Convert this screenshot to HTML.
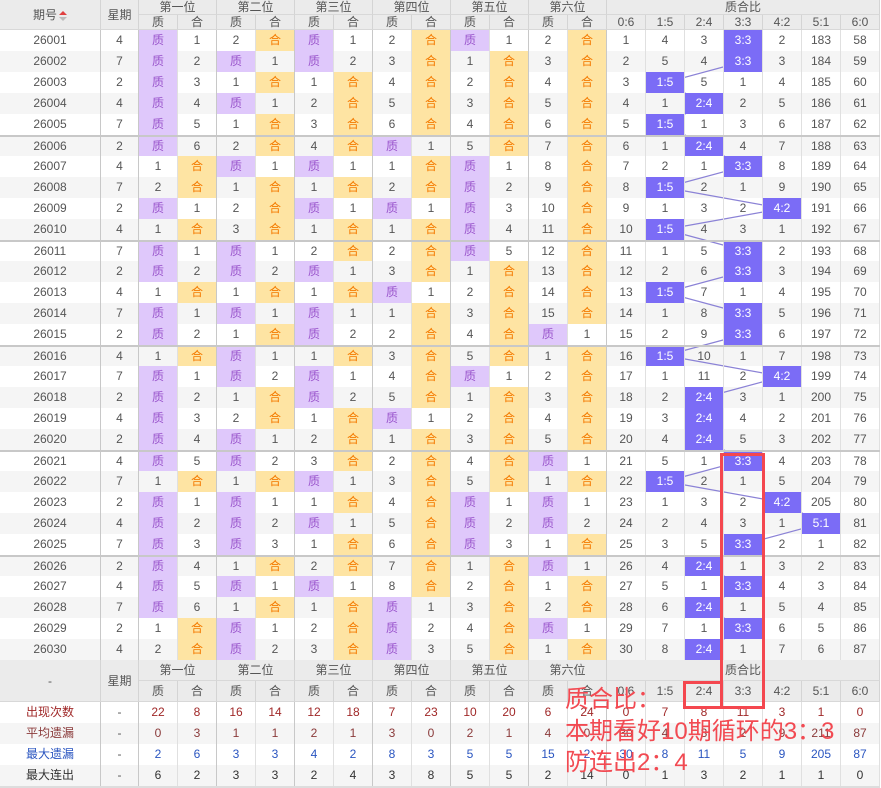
<!DOCTYPE html>
<html><head><meta charset="utf-8">
<style>
*{margin:0;padding:0}
body{width:881px;height:788px;overflow:hidden;background:#fff;font-family:"Liberation Sans","Noto Sans CJK SC",sans-serif;position:relative}
.hd{display:grid;grid-template-columns:101px 38px repeat(19,39px);grid-template-rows:15px 15px;background:#ebebeb;width:880px}
.hd div{font-size:12px;color:#555;text-align:center;line-height:15px;border-right:1px solid #d4d4d4;border-bottom:1px solid #d8d8d8;box-sizing:border-box}
.hd .s2{grid-row:span 2;line-height:30px}
.hd .c2{grid-column:span 2}
.hd .c7{grid-column:span 7}
.ft{grid-template-rows:21px 21px;position:absolute;left:0;top:660px}
.ft div{line-height:21px}
.ft .s2{line-height:42px}
.data{position:absolute;left:0;top:30px;width:880px;height:630px;background:repeating-linear-gradient(#fff 0 21px,#f5f5f5 21px 42px)}
.r{display:flex;height:21px;position:relative;z-index:1;box-sizing:border-box}
.r i{font-style:normal;width:39px;flex:none;box-sizing:border-box;border-right:1px solid #e0e0e0;text-align:center;line-height:21px;font-size:12px;color:#555}
.r i:first-child{width:101px;border-right-color:#c8c8c8}
.r i:nth-child(2){width:38px}
.r i:nth-child(2),.r i:nth-child(4),.r i:nth-child(6),.r i:nth-child(8),.r i:nth-child(10),.r i:nth-child(12),.r i:nth-child(14){border-right-color:#c8c8c8}
.g{border-top:2px solid #c8c8c8}
.g i{line-height:19px}
.r i.z{background:#dfc8fb;color:#9a55cc}
.r i.h{background:#fee4a3;color:#f47a00}
.r i.p{background:#7b6cf6;color:#fff}
svg.ln{position:absolute;left:0;top:0;z-index:0}
.st{position:absolute;left:0;top:702px;width:880px}
.st .r:nth-child(even){background:#f5f5f5}
.st .a i{color:#a02828}
.st .b i{color:#8a3a3a}
.st .c i{color:#2a55c0}
.st .d i{color:#333}
.st .r i:nth-child(2){color:#555}
.box{position:absolute;border:3px solid #f4474f;box-sizing:border-box;z-index:5}
.ann{position:absolute;left:565px;top:684px;z-index:6;color:#f24a52;font-size:24px;line-height:31.5px;font-family:"Liberation Sans","Noto Sans CJK SC",sans-serif;white-space:nowrap}
.arr{display:inline-block;vertical-align:middle;width:8px;height:10px;position:relative;margin-left:2px}
.arr:before{content:"";position:absolute;left:0;top:0;border:4px solid transparent;border-bottom:4px solid #e04040;border-top:0}
.arr:after{content:"";position:absolute;left:0;top:6px;border:4px solid transparent;border-top:4px solid #bbb;border-bottom:0}
.bot{position:absolute;left:0;top:786px;width:880px;height:2px;background:#ddd}
</style></head><body>
<div class="hd">
<div class="s2">期号<span class="arr"></span></div><div class="s2">星期</div>
<div class="c2">第一位</div><div class="c2">第二位</div><div class="c2">第三位</div><div class="c2">第四位</div><div class="c2">第五位</div><div class="c2">第六位</div><div class="c7">质合比</div>
<div>质</div><div>合</div><div>质</div><div>合</div><div>质</div><div>合</div><div>质</div><div>合</div><div>质</div><div>合</div><div>质</div><div>合</div>
<div>0:6</div><div>1:5</div><div>2:4</div><div>3:3</div><div>4:2</div><div>5:1</div><div>6:0</div>
</div>
<div class="data">
<svg class="ln" width="880" height="630" viewBox="0 30 880 630"><polyline fill="none" stroke="#8b82d6" stroke-width="1.2" points="743.5,40.5 743.5,61.5 665.5,82.5 704.5,103.5 665.5,124.5 704.5,145.5 743.5,166.5 665.5,187.5 782.5,208.5 665.5,229.5 743.5,250.5 743.5,271.5 665.5,292.5 743.5,313.5 743.5,334.5 665.5,355.5 782.5,376.5 704.5,397.5 704.5,418.5 704.5,439.5 743.5,460.5 665.5,481.5 782.5,502.5 821.5,523.5 743.5,544.5 704.5,565.5 743.5,586.5 704.5,607.5 743.5,628.5 704.5,649.5"/></svg>
<div class="r"><i>26001</i><i>4</i><i class="z">质</i><i>1</i><i>2</i><i class="h">合</i><i class="z">质</i><i>1</i><i>2</i><i class="h">合</i><i class="z">质</i><i>1</i><i>2</i><i class="h">合</i><i>1</i><i>4</i><i>3</i><i class="p">3:3</i><i>2</i><i>183</i><i>58</i></div>
<div class="r"><i>26002</i><i>7</i><i class="z">质</i><i>2</i><i class="z">质</i><i>1</i><i class="z">质</i><i>2</i><i>3</i><i class="h">合</i><i>1</i><i class="h">合</i><i>3</i><i class="h">合</i><i>2</i><i>5</i><i>4</i><i class="p">3:3</i><i>3</i><i>184</i><i>59</i></div>
<div class="r"><i>26003</i><i>2</i><i class="z">质</i><i>3</i><i>1</i><i class="h">合</i><i>1</i><i class="h">合</i><i>4</i><i class="h">合</i><i>2</i><i class="h">合</i><i>4</i><i class="h">合</i><i>3</i><i class="p">1:5</i><i>5</i><i>1</i><i>4</i><i>185</i><i>60</i></div>
<div class="r"><i>26004</i><i>4</i><i class="z">质</i><i>4</i><i class="z">质</i><i>1</i><i>2</i><i class="h">合</i><i>5</i><i class="h">合</i><i>3</i><i class="h">合</i><i>5</i><i class="h">合</i><i>4</i><i>1</i><i class="p">2:4</i><i>2</i><i>5</i><i>186</i><i>61</i></div>
<div class="r"><i>26005</i><i>7</i><i class="z">质</i><i>5</i><i>1</i><i class="h">合</i><i>3</i><i class="h">合</i><i>6</i><i class="h">合</i><i>4</i><i class="h">合</i><i>6</i><i class="h">合</i><i>5</i><i class="p">1:5</i><i>1</i><i>3</i><i>6</i><i>187</i><i>62</i></div>
<div class="r g"><i>26006</i><i>2</i><i class="z">质</i><i>6</i><i>2</i><i class="h">合</i><i>4</i><i class="h">合</i><i class="z">质</i><i>1</i><i>5</i><i class="h">合</i><i>7</i><i class="h">合</i><i>6</i><i>1</i><i class="p">2:4</i><i>4</i><i>7</i><i>188</i><i>63</i></div>
<div class="r"><i>26007</i><i>4</i><i>1</i><i class="h">合</i><i class="z">质</i><i>1</i><i class="z">质</i><i>1</i><i>1</i><i class="h">合</i><i class="z">质</i><i>1</i><i>8</i><i class="h">合</i><i>7</i><i>2</i><i>1</i><i class="p">3:3</i><i>8</i><i>189</i><i>64</i></div>
<div class="r"><i>26008</i><i>7</i><i>2</i><i class="h">合</i><i>1</i><i class="h">合</i><i>1</i><i class="h">合</i><i>2</i><i class="h">合</i><i class="z">质</i><i>2</i><i>9</i><i class="h">合</i><i>8</i><i class="p">1:5</i><i>2</i><i>1</i><i>9</i><i>190</i><i>65</i></div>
<div class="r"><i>26009</i><i>2</i><i class="z">质</i><i>1</i><i>2</i><i class="h">合</i><i class="z">质</i><i>1</i><i class="z">质</i><i>1</i><i class="z">质</i><i>3</i><i>10</i><i class="h">合</i><i>9</i><i>1</i><i>3</i><i>2</i><i class="p">4:2</i><i>191</i><i>66</i></div>
<div class="r"><i>26010</i><i>4</i><i>1</i><i class="h">合</i><i>3</i><i class="h">合</i><i>1</i><i class="h">合</i><i>1</i><i class="h">合</i><i class="z">质</i><i>4</i><i>11</i><i class="h">合</i><i>10</i><i class="p">1:5</i><i>4</i><i>3</i><i>1</i><i>192</i><i>67</i></div>
<div class="r g"><i>26011</i><i>7</i><i class="z">质</i><i>1</i><i class="z">质</i><i>1</i><i>2</i><i class="h">合</i><i>2</i><i class="h">合</i><i class="z">质</i><i>5</i><i>12</i><i class="h">合</i><i>11</i><i>1</i><i>5</i><i class="p">3:3</i><i>2</i><i>193</i><i>68</i></div>
<div class="r"><i>26012</i><i>2</i><i class="z">质</i><i>2</i><i class="z">质</i><i>2</i><i class="z">质</i><i>1</i><i>3</i><i class="h">合</i><i>1</i><i class="h">合</i><i>13</i><i class="h">合</i><i>12</i><i>2</i><i>6</i><i class="p">3:3</i><i>3</i><i>194</i><i>69</i></div>
<div class="r"><i>26013</i><i>4</i><i>1</i><i class="h">合</i><i>1</i><i class="h">合</i><i>1</i><i class="h">合</i><i class="z">质</i><i>1</i><i>2</i><i class="h">合</i><i>14</i><i class="h">合</i><i>13</i><i class="p">1:5</i><i>7</i><i>1</i><i>4</i><i>195</i><i>70</i></div>
<div class="r"><i>26014</i><i>7</i><i class="z">质</i><i>1</i><i class="z">质</i><i>1</i><i class="z">质</i><i>1</i><i>1</i><i class="h">合</i><i>3</i><i class="h">合</i><i>15</i><i class="h">合</i><i>14</i><i>1</i><i>8</i><i class="p">3:3</i><i>5</i><i>196</i><i>71</i></div>
<div class="r"><i>26015</i><i>2</i><i class="z">质</i><i>2</i><i>1</i><i class="h">合</i><i class="z">质</i><i>2</i><i>2</i><i class="h">合</i><i>4</i><i class="h">合</i><i class="z">质</i><i>1</i><i>15</i><i>2</i><i>9</i><i class="p">3:3</i><i>6</i><i>197</i><i>72</i></div>
<div class="r g"><i>26016</i><i>4</i><i>1</i><i class="h">合</i><i class="z">质</i><i>1</i><i>1</i><i class="h">合</i><i>3</i><i class="h">合</i><i>5</i><i class="h">合</i><i>1</i><i class="h">合</i><i>16</i><i class="p">1:5</i><i>10</i><i>1</i><i>7</i><i>198</i><i>73</i></div>
<div class="r"><i>26017</i><i>7</i><i class="z">质</i><i>1</i><i class="z">质</i><i>2</i><i class="z">质</i><i>1</i><i>4</i><i class="h">合</i><i class="z">质</i><i>1</i><i>2</i><i class="h">合</i><i>17</i><i>1</i><i>11</i><i>2</i><i class="p">4:2</i><i>199</i><i>74</i></div>
<div class="r"><i>26018</i><i>2</i><i class="z">质</i><i>2</i><i>1</i><i class="h">合</i><i class="z">质</i><i>2</i><i>5</i><i class="h">合</i><i>1</i><i class="h">合</i><i>3</i><i class="h">合</i><i>18</i><i>2</i><i class="p">2:4</i><i>3</i><i>1</i><i>200</i><i>75</i></div>
<div class="r"><i>26019</i><i>4</i><i class="z">质</i><i>3</i><i>2</i><i class="h">合</i><i>1</i><i class="h">合</i><i class="z">质</i><i>1</i><i>2</i><i class="h">合</i><i>4</i><i class="h">合</i><i>19</i><i>3</i><i class="p">2:4</i><i>4</i><i>2</i><i>201</i><i>76</i></div>
<div class="r"><i>26020</i><i>2</i><i class="z">质</i><i>4</i><i class="z">质</i><i>1</i><i>2</i><i class="h">合</i><i>1</i><i class="h">合</i><i>3</i><i class="h">合</i><i>5</i><i class="h">合</i><i>20</i><i>4</i><i class="p">2:4</i><i>5</i><i>3</i><i>202</i><i>77</i></div>
<div class="r g"><i>26021</i><i>4</i><i class="z">质</i><i>5</i><i class="z">质</i><i>2</i><i>3</i><i class="h">合</i><i>2</i><i class="h">合</i><i>4</i><i class="h">合</i><i class="z">质</i><i>1</i><i>21</i><i>5</i><i>1</i><i class="p">3:3</i><i>4</i><i>203</i><i>78</i></div>
<div class="r"><i>26022</i><i>7</i><i>1</i><i class="h">合</i><i>1</i><i class="h">合</i><i class="z">质</i><i>1</i><i>3</i><i class="h">合</i><i>5</i><i class="h">合</i><i>1</i><i class="h">合</i><i>22</i><i class="p">1:5</i><i>2</i><i>1</i><i>5</i><i>204</i><i>79</i></div>
<div class="r"><i>26023</i><i>2</i><i class="z">质</i><i>1</i><i class="z">质</i><i>1</i><i>1</i><i class="h">合</i><i>4</i><i class="h">合</i><i class="z">质</i><i>1</i><i class="z">质</i><i>1</i><i>23</i><i>1</i><i>3</i><i>2</i><i class="p">4:2</i><i>205</i><i>80</i></div>
<div class="r"><i>26024</i><i>4</i><i class="z">质</i><i>2</i><i class="z">质</i><i>2</i><i class="z">质</i><i>1</i><i>5</i><i class="h">合</i><i class="z">质</i><i>2</i><i class="z">质</i><i>2</i><i>24</i><i>2</i><i>4</i><i>3</i><i>1</i><i class="p">5:1</i><i>81</i></div>
<div class="r"><i>26025</i><i>7</i><i class="z">质</i><i>3</i><i class="z">质</i><i>3</i><i>1</i><i class="h">合</i><i>6</i><i class="h">合</i><i class="z">质</i><i>3</i><i>1</i><i class="h">合</i><i>25</i><i>3</i><i>5</i><i class="p">3:3</i><i>2</i><i>1</i><i>82</i></div>
<div class="r g"><i>26026</i><i>2</i><i class="z">质</i><i>4</i><i>1</i><i class="h">合</i><i>2</i><i class="h">合</i><i>7</i><i class="h">合</i><i>1</i><i class="h">合</i><i class="z">质</i><i>1</i><i>26</i><i>4</i><i class="p">2:4</i><i>1</i><i>3</i><i>2</i><i>83</i></div>
<div class="r"><i>26027</i><i>4</i><i class="z">质</i><i>5</i><i class="z">质</i><i>1</i><i class="z">质</i><i>1</i><i>8</i><i class="h">合</i><i>2</i><i class="h">合</i><i>1</i><i class="h">合</i><i>27</i><i>5</i><i>1</i><i class="p">3:3</i><i>4</i><i>3</i><i>84</i></div>
<div class="r"><i>26028</i><i>7</i><i class="z">质</i><i>6</i><i>1</i><i class="h">合</i><i>1</i><i class="h">合</i><i class="z">质</i><i>1</i><i>3</i><i class="h">合</i><i>2</i><i class="h">合</i><i>28</i><i>6</i><i class="p">2:4</i><i>1</i><i>5</i><i>4</i><i>85</i></div>
<div class="r"><i>26029</i><i>2</i><i>1</i><i class="h">合</i><i class="z">质</i><i>1</i><i>2</i><i class="h">合</i><i class="z">质</i><i>2</i><i>4</i><i class="h">合</i><i class="z">质</i><i>1</i><i>29</i><i>7</i><i>1</i><i class="p">3:3</i><i>6</i><i>5</i><i>86</i></div>
<div class="r"><i>26030</i><i>4</i><i>2</i><i class="h">合</i><i class="z">质</i><i>2</i><i>3</i><i class="h">合</i><i class="z">质</i><i>3</i><i>5</i><i class="h">合</i><i>1</i><i class="h">合</i><i>30</i><i>8</i><i class="p">2:4</i><i>1</i><i>7</i><i>6</i><i>87</i></div>
</div>
<div class="hd ft">
<div class="s2">-</div><div class="s2">星期</div>
<div class="c2">第一位</div><div class="c2">第二位</div><div class="c2">第三位</div><div class="c2">第四位</div><div class="c2">第五位</div><div class="c2">第六位</div><div class="c7">质合比</div>
<div>质</div><div>合</div><div>质</div><div>合</div><div>质</div><div>合</div><div>质</div><div>合</div><div>质</div><div>合</div><div>质</div><div>合</div>
<div>0:6</div><div>1:5</div><div>2:4</div><div>3:3</div><div>4:2</div><div>5:1</div><div>6:0</div>
</div>
<div class="st">
<div class="r a"><i>出现次数</i><i>-</i><i>22</i><i>8</i><i>16</i><i>14</i><i>12</i><i>18</i><i>7</i><i>23</i><i>10</i><i>20</i><i>6</i><i>24</i><i>0</i><i>7</i><i>8</i><i>11</i><i>3</i><i>1</i><i>0</i></div>
<div class="r b"><i>平均遗漏</i><i>-</i><i>0</i><i>3</i><i>1</i><i>1</i><i>2</i><i>1</i><i>3</i><i>0</i><i>2</i><i>1</i><i>4</i><i>0</i><i>30</i><i>4</i><i>3</i><i>2</i><i>9</i><i>211</i><i>87</i></div>
<div class="r c"><i>最大遗漏</i><i>-</i><i>2</i><i>6</i><i>3</i><i>3</i><i>4</i><i>2</i><i>8</i><i>3</i><i>5</i><i>5</i><i>15</i><i>2</i><i>30</i><i>8</i><i>11</i><i>5</i><i>9</i><i>205</i><i>87</i></div>
<div class="r d"><i>最大连出</i><i>-</i><i>6</i><i>2</i><i>3</i><i>3</i><i>2</i><i>4</i><i>3</i><i>8</i><i>5</i><i>5</i><i>2</i><i>14</i><i>0</i><i>1</i><i>3</i><i>2</i><i>1</i><i>1</i><i>0</i></div>
</div>
<div class="bot"></div>
<div class="box" style="left:720px;top:453px;width:45px;height:256px"></div>
<div class="box" style="left:683px;top:681px;width:40px;height:28px"></div>
<div class="ann">质合比：<br>本期看好10期循环的3：3<br>防连出2：4</div>
</body></html>
